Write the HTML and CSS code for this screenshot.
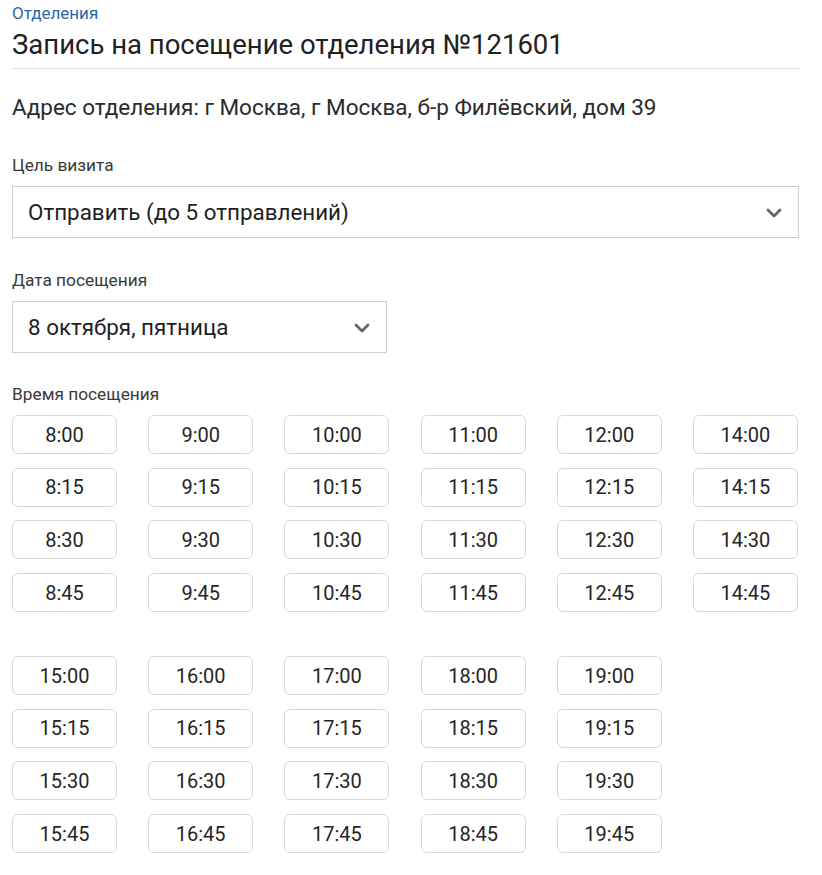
FILE: index.html
```html
<!DOCTYPE html>
<html lang="ru">
<head>
<meta charset="utf-8">
<link rel="stylesheet" href="styles.css">
</head>
<body>
<div class="page">
  <a class="crumb" href="#">Отделения</a>
  <h1 class="title">Запись на посещение отделения №121601</h1>
  <p class="address">Адрес отделения: г Москва, г Москва, б-р Филёвский, дом 39</p>

  <div class="field field-goal">
    <div class="label">Цель визита</div>
    <div class="select select-wide">
      <span>Отправить (до 5 отправлений)</span>
      <svg class="chev" width="16" height="10" viewBox="0 0 16 10"><path d="M2 2l6 6 6-6" fill="none" stroke="#666" stroke-width="2.8" stroke-linecap="round" stroke-linejoin="round"/></svg>
    </div>
  </div>

  <div class="field field-date">
    <div class="label">Дата посещения</div>
    <div class="select select-narrow">
      <span>8 октября, пятница</span>
      <svg class="chev" width="16" height="10" viewBox="0 0 16 10"><path d="M2 2l6 6 6-6" fill="none" stroke="#666" stroke-width="2.8" stroke-linecap="round" stroke-linejoin="round"/></svg>
    </div>
  </div>

  <div class="label label-time">Время посещения</div>
  <div class="slots">
    <button class="slot">8:00</button><button class="slot">9:00</button><button class="slot">10:00</button><button class="slot">11:00</button><button class="slot">12:00</button><button class="slot">14:00</button>
    <button class="slot">8:15</button><button class="slot">9:15</button><button class="slot">10:15</button><button class="slot">11:15</button><button class="slot">12:15</button><button class="slot">14:15</button>
    <button class="slot">8:30</button><button class="slot">9:30</button><button class="slot">10:30</button><button class="slot">11:30</button><button class="slot">12:30</button><button class="slot">14:30</button>
    <button class="slot">8:45</button><button class="slot">9:45</button><button class="slot">10:45</button><button class="slot">11:45</button><button class="slot">12:45</button><button class="slot">14:45</button>
  </div>
  <div class="slots slots-second">
    <button class="slot">15:00</button><button class="slot">16:00</button><button class="slot">17:00</button><button class="slot">18:00</button><button class="slot">19:00</button><span></span>
    <button class="slot">15:15</button><button class="slot">16:15</button><button class="slot">17:15</button><button class="slot">18:15</button><button class="slot">19:15</button><span></span>
    <button class="slot">15:30</button><button class="slot">16:30</button><button class="slot">17:30</button><button class="slot">18:30</button><button class="slot">19:30</button><span></span>
    <button class="slot">15:45</button><button class="slot">16:45</button><button class="slot">17:45</button><button class="slot">18:45</button><button class="slot">19:45</button><span></span>
  </div>
</div>
</body>
</html>
```
FILE: styles.css
```css
* { box-sizing: border-box; }
body {
  margin: 0;
  background: #fff;
  font-family: Roboto, "Noto Sans", Arial, sans-serif;
  color: #222;
}
.page {
  padding: 3px 23px 0 12px;
}
.crumb {
  display: block;
  font-size: 17px;
  line-height: 20px;
  color: #2b66a6;
  text-decoration: none;
}
.title {
  margin: 5px 0 0;
  font-size: 27.5px;
  font-weight: 400;
  line-height: 34px;
  color: #222;
  padding-bottom: 6px;
  border-bottom: 1px solid #e0e0e0;
}
.address {
  margin: 24px 0 0;
  font-size: 22.5px;
  line-height: 28px;
  color: #2b2b2b;
}
.field-goal { margin-top: 33px; }
.field-date { margin-top: 31px; }
.label {
  font-size: 17.3px;
  line-height: 22px;
  color: #3a3a3a;
}
.select {
  margin-top: 10px;
  height: 52px;
  border: 1px solid #cfcfcf;
  display: flex;
  align-items: center;
  justify-content: space-between;
  padding: 0 16px 0 15px;
  font-size: 22.4px;
  color: #1f1f1f;
}
.select-narrow { width: 375px; }
.chev { display: block; margin-top: 2px; }
.label-time { margin-top: 30px; }
.slots {
  margin-top: 10px;
  display: grid;
  grid-template-columns: repeat(6, 105px);
  justify-content: space-between;
  row-gap: 13.7px;
  width: 786px;
}
.slots-second { margin-top: 44px; }
.slot {
  height: 39px;
  border: 1px solid #d9d9d9;
  border-radius: 6px;
  background: #fff;
  font-family: Roboto, "Noto Sans", Arial, sans-serif;
  font-size: 20px;
  color: #252525;
  padding: 0;
}
```
